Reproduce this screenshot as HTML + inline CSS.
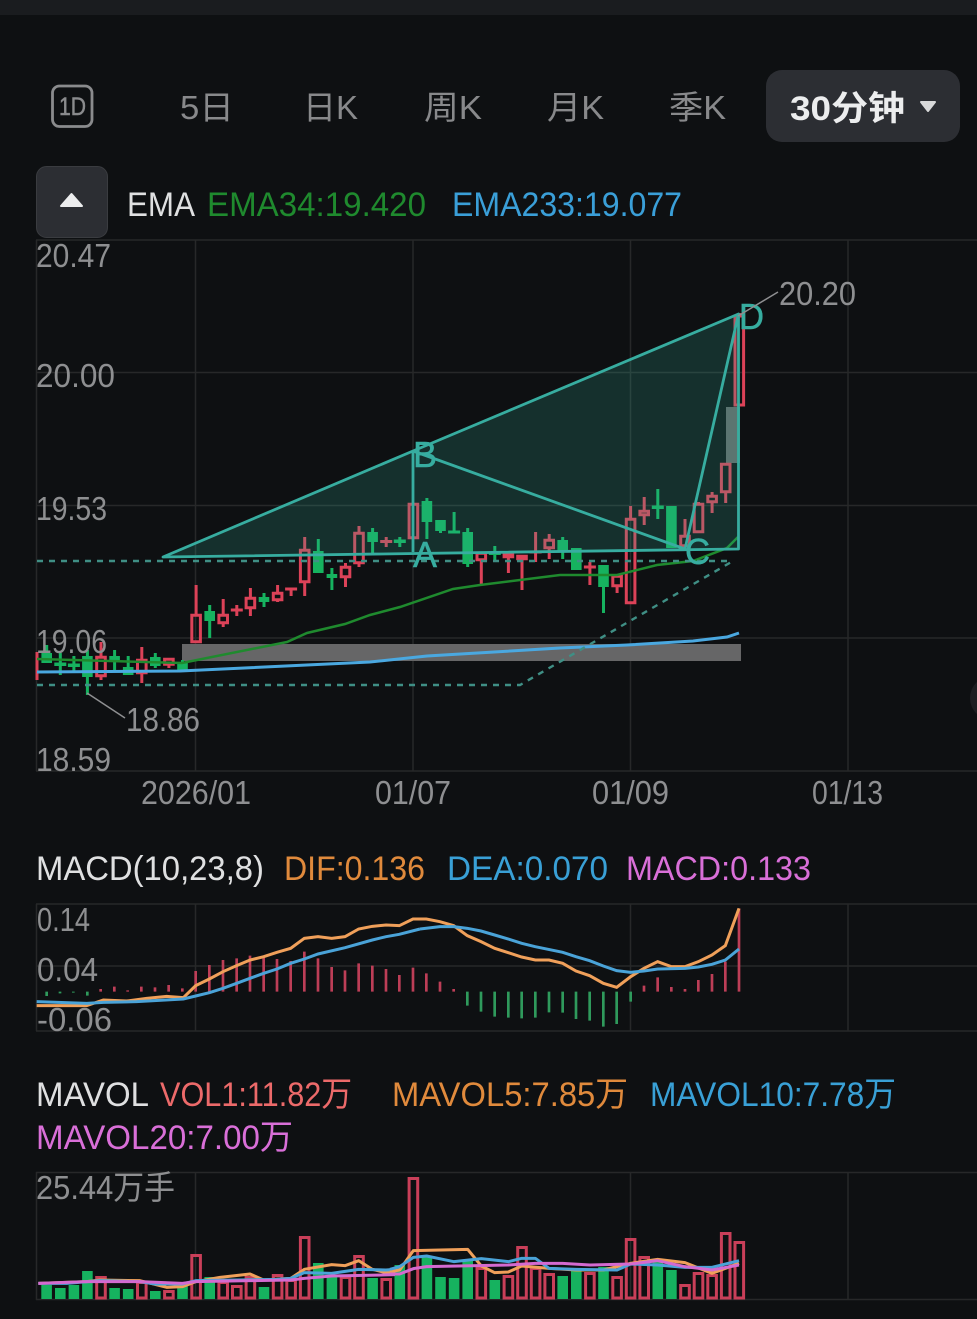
<!DOCTYPE html>
<html lang="zh">
<head>
<meta charset="utf-8">
<title>Chart</title>
<style>
html,body{margin:0;padding:0;background:#0e1012;width:977px;height:1319px;overflow:hidden}
svg{display:block;position:absolute;left:0;top:0}
text{font-family:"Liberation Sans","Noto Sans CJK SC",sans-serif}
.g{fill:#8e8f91;font-size:33px}
.t{fill:#88898b;font-size:33px}
.l{font-size:34px}
.a{fill:#37ada0;font-size:36px;stroke:#37ada0;stroke-width:.5px}
</style>
</head>
<body>
<svg width="977" height="1319" viewBox="0 0 977 1319" xmlns="http://www.w3.org/2000/svg">
<rect width="977" height="1319" fill="#0e1012"/>
<rect width="977" height="15" fill="#1a1c1f"/>

<!-- tabs -->
<rect x="52.5" y="86" width="39.5" height="40.5" rx="7" fill="none" stroke="#8a8b8d" stroke-width="2.8"/>
<text x="59" y="115" font-size="25" fill="#8a8b8d" stroke="#8a8b8d" stroke-width=".5" textLength="27" lengthAdjust="spacingAndGlyphs">1D</text>
<text class="t" x="180" y="119" textLength="54" lengthAdjust="spacingAndGlyphs">5日</text>
<text class="t" x="303" y="119" textLength="55" lengthAdjust="spacingAndGlyphs">日K</text>
<text class="t" x="424" y="119" textLength="58" lengthAdjust="spacingAndGlyphs">周K</text>
<text class="t" x="547" y="119" textLength="57" lengthAdjust="spacingAndGlyphs">月K</text>
<text class="t" x="669" y="119" textLength="57" lengthAdjust="spacingAndGlyphs">季K</text>
<rect x="766" y="70" width="194" height="72" rx="16" fill="#2c2e33"/>
<text x="790" y="120" font-size="34" font-weight="700" fill="#ecedee" textLength="115" lengthAdjust="spacingAndGlyphs">30分钟</text>
<path d="M921 102H935L928 111Z" fill="#d8d9da" stroke="#d8d9da" stroke-width="2" stroke-linejoin="round"/>

<!-- EMA header -->
<rect x="36.5" y="166.5" width="71" height="71" rx="10" fill="#2c2e33" stroke="#3a3c40"/>
<path d="M61 206H82L71.5 194Z" fill="#ecedee" stroke="#ecedee" stroke-width="2" stroke-linejoin="round"/>
<text class="l" x="127" y="216" fill="#dfe0e1" textLength="68" lengthAdjust="spacingAndGlyphs">EMA</text>
<text class="l" x="207" y="216" fill="#1f8a2e" textLength="219" lengthAdjust="spacingAndGlyphs">EMA34:19.420</text>
<text class="l" x="452" y="216" fill="#3a9fd8" textLength="230" lengthAdjust="spacingAndGlyphs">EMA233:19.077</text>

<!-- main grid -->
<path d="M36 240H977M36 372.500H977M36 505.500H977M36 638H977M36 771H977M36.500 240V771M195.500 240V771M413 240V771M630.500 240V771M848 240V771" stroke="#272829" stroke-width="1.500" fill="none"/>

<!-- gray zones -->
<rect x="182" y="644" width="559" height="17" fill="#666667"/>
<rect x="726" y="407" width="14" height="56" fill="#666667"/>

<!-- green candles -->
<path d="M46.700 645V663M60.300 653V675M73.900 656V672M87.400 650V695M114.600 650V671M128.200 656V675M155.300 653V668M182.500 660V671M209.700 605V638M264 593V607M318.300 539V573M331.900 568V590M372.600 528V553M399.800 537V547M426.900 498V539M440.500 520V533M454.100 512V533M467.700 528V567M494.800 546V562M562.700 537V559M576.300 548V570M603.500 565V613M657.800 489V519M671.400 506V548" stroke="#16b25f" stroke-width="3" fill="none"/>
<path d="M41.400 653h10.600v10h-10.600zM54.300 662.500h12v3.500h-12zM67.900 663.500h12v3.500h-12zM82.100 656h10.600v21h-10.600zM109.300 656h10.600v5h-10.600zM122.900 667h10.600v8h-10.600zM150 657h10.600v9h-10.600zM177.200 663h10.600v8h-10.600zM204.400 611h10.600v10h-10.600zM258.700 597h10.600v5h-10.600zM313 551h10.600v22h-10.600zM326.600 574h10.600v4h-10.600zM367.300 532h10.600v10h-10.600zM393.800 539.500h12v3.500h-12zM421.600 501h10.600v21h-10.600zM435.200 520h10.600v11h-10.600zM448.100 530.500h12v3h-12zM462.400 532h10.600v32h-10.600zM488.800 551.500h12v3.500h-12zM557.400 540h10.600v12h-10.600zM571 548h10.600v22h-10.600zM598.200 565h10.600v22h-10.600zM651.800 505.500h12v3.500h-12zM666.100 506h10.600v42h-10.600z" fill="#16b25f"/>

<!-- red candles -->
<path d="M37 652V680M101 642V656M101 677V680M141.800 647V659M141.800 674V683M168.900 665V668M196.100 585V614M223.200 599V614M223.200 624V627M236.800 605V616M230.800 610H242.800M250.400 588V597M250.400 609V616M277.600 585V592M277.600 601V602M291.100 588V596M285.100 589H297.100M304.700 537V549M304.700 583V596M345.500 563V566M345.500 578V587M359 526V532M359 564V567M386.200 537V547M380.200 541.500H392.200M481.300 561V585M508.400 558V573M522 560V590M535.600 532V562M529.600 552H541.600M549.200 534V539M549.200 549V559M589.900 562V585M583.900 567H595.900M617.100 587V593M630.600 506V518M644.200 497V510M644.200 516V525M685 519V535M698.500 502V503M712.100 492V495M712.100 503V513M725.700 493V503M739.300 313V316" stroke="#dc4258" stroke-width="3" fill="none"/>
<path d="M96.700 657.300h8.600v18.400h-8.600zM137.500 660.300h8.600v12.400h-8.600zM164.600 659.300h8.600v5h-8.600zM191.800 615.300h8.600v26.400h-8.600zM218.900 615.300h8.600v7.400h-8.600zM246.100 598.300h8.600v9.400h-8.600zM273.300 593.300h8.600v6.400h-8.600zM300.400 550.300h8.600v31.400h-8.600zM341.200 567.300h8.600v9.400h-8.600zM354.700 533.300h8.600v29.400h-8.600zM409.100 504.300h8.600v33.400h-8.600zM477 553.300h8.600v6.400h-8.600zM504.100 554.300h8.600v2.400h-8.600zM517.700 556.300h8.600v2.400h-8.600zM544.900 540.300h8.600v7.400h-8.600zM612.800 576.300h8.600v9.400h-8.600zM626.300 519.300h8.600v83.400h-8.600zM639.900 511.300h8.600v3.400h-8.600zM680.700 536.300h8.600v9.400h-8.600zM694.200 504.300h8.600v27.400h-8.600zM707.800 496.300h8.600v5.400h-8.600zM721.400 464.300h8.600v27.400h-8.600zM735 316h8.600v89h-8.600z" fill="none" stroke="#dc4258" stroke-width="3"/>

<!-- EMA lines -->
<path d="M37 659L182 663L287 642L307 633L345 624L370 615L400 607L453 589L480 585L560 575L617 575L657 565L693 561L727 548L738 537" fill="none" stroke="#1f8a2e" stroke-width="2.500"/>
<path d="M37 672L180 671L370 662L427 656L560 648L627 645L693 641L727 637L739 633" fill="none" stroke="#4aa8e0" stroke-width="3"/>

<!-- harmonic overlay -->
<path d="M163 557L738.500 314V549Z" fill="#33b39c" fill-opacity=".2"/>
<path d="M163 557L413 451L738.500 314V549ZM413 451V552M413 451L685 549L738.500 314" fill="none" stroke="#37ada0" stroke-width="2.800" stroke-linejoin="round"/>
<path d="M37 561H733M37 685H520L733 561" fill="none" stroke="#3f8f85" stroke-width="2.400" stroke-dasharray="6 6"/>
<text class="a" x="413" y="567" textLength="24" lengthAdjust="spacingAndGlyphs">A</text>
<text class="a" x="413" y="467" textLength="24" lengthAdjust="spacingAndGlyphs">B</text>
<text class="a" x="685" y="564" textLength="25" lengthAdjust="spacingAndGlyphs">C</text>
<text class="a" x="739" y="329" textLength="25" lengthAdjust="spacingAndGlyphs">D</text>

<!-- callouts -->
<path d="M87 693L125 718M738 316L778 292" stroke="#8e8f91" stroke-width="1.500" fill="none"/>

<!-- axis labels -->
<text class="g" x="36" y="267" textLength="75" lengthAdjust="spacingAndGlyphs">20.47</text>
<text class="g" x="36" y="387" textLength="79" lengthAdjust="spacingAndGlyphs">20.00</text>
<text class="g" x="36" y="520" textLength="71" lengthAdjust="spacingAndGlyphs">19.53</text>
<text class="g" x="36" y="653" textLength="71" lengthAdjust="spacingAndGlyphs">19.06</text>
<text class="g" x="36" y="771" textLength="75" lengthAdjust="spacingAndGlyphs">18.59</text>
<text class="g" x="126" y="731" textLength="74" lengthAdjust="spacingAndGlyphs">18.86</text>
<text class="g" x="779" y="305" textLength="77" lengthAdjust="spacingAndGlyphs">20.20</text>
<text class="g" x="141" y="804" textLength="110" lengthAdjust="spacingAndGlyphs">2026/01</text>
<text class="g" x="375" y="804" textLength="76" lengthAdjust="spacingAndGlyphs">01/07</text>
<text class="g" x="592" y="804" textLength="77" lengthAdjust="spacingAndGlyphs">01/09</text>
<text class="g" x="812" y="804" textLength="71" lengthAdjust="spacingAndGlyphs">01/13</text>

<circle cx="992" cy="698" r="22" fill="#1d1e21"/>

<!-- MACD labels -->
<text class="l" x="36" y="880" fill="#dfe0e1" textLength="228" lengthAdjust="spacingAndGlyphs">MACD(10,23,8)</text>
<text class="l" x="284" y="880" fill="#e08a3c" textLength="141" lengthAdjust="spacingAndGlyphs">DIF:0.136</text>
<text class="l" x="447" y="880" fill="#39a0d6" textLength="161" lengthAdjust="spacingAndGlyphs">DEA:0.070</text>
<text class="l" x="626" y="880" fill="#d96fd8" textLength="185" lengthAdjust="spacingAndGlyphs">MACD:0.133</text>

<!-- MACD grid -->
<path d="M36 904H977M36 966H977M36 1031H977M36.500 904V1031M195.500 904V1031M630.500 904V1031M848 904V1031" stroke="#272829" stroke-width="1.500" fill="none"/>

<!-- MACD left part -->
<g transform="translate(20,895) scale(.33333)" fill="none" stroke-width="8">
<path d="M80 290V303M120 290V295M160 290V293M202 290V302" stroke="#2f9a5c"/>
<path d="M242 282V290M283 275V290M323 286V290M364 275V290M405 277V290M446 270V290M487 280V290M527 228V290M568 210V290M609 195V290M650 190V290M690 182V290M731 188V290M771 192V290M812 198V290M853 170V290M894 190V290M935 216V290M975 226V290M1016 205V290M1057 212V290M1098 222V290M1138 240V290M1179 218V290" stroke="#bd3e57"/>
<path d="M50 332L200 332L250 315L320 318L380 310L440 304L490 308L527 272L568 252L609 230L650 212L690 195L731 185L771 172L812 160L853 130L894 125L935 130L975 125L1016 102L1057 94L1098 90L1138 92L1179 72L1200 72" stroke="#f0a05a" stroke-width="9"/>
<path d="M50 320L200 325L250 322L350 320L490 312L527 303L568 293L609 280L650 265L690 250L731 235L771 222L812 205L853 192L894 177L975 158L1057 135L1098 125L1138 118L1200 102" stroke="#4aa3d8" stroke-width="9"/>
</g>
<!-- MACD right part -->
<g transform="translate(420,895) scale(.33333)" fill="none" stroke-width="8">
<path d="M142 290V332M183 290V350M224 290V365M265 290V368M305 290V370M346 290V368M387 290V352M428 290V353M468 290V372M509 290V377M550 290V395M590 290V387M632 290V320" stroke="#2f9a5c"/>
<path d="M19 235V290M60 260V290M101 282V290M672 272V290M713 247V290M754 276V290M795 282V290M835 255V290M876 237V290M916 200V290M957 40V290" stroke="#bd3e57"/>
<path d="M0 72L19 72L60 80L101 92L142 122L183 140L224 160L265 173L305 186L346 195L387 195L428 205L468 228L509 242L550 265L590 277L632 245L672 220L713 200L754 215L795 215L835 200L876 180L916 152L957 40" stroke="#f0a05a" stroke-width="9"/>
<path d="M0 102L60 95L101 95L142 100L183 108L224 120L265 132L305 145L346 155L428 172L468 185L509 197L550 213L590 227L632 232L672 228L713 222L795 220L835 216L876 208L916 195L957 162" stroke="#4aa3d8" stroke-width="9"/>
</g>
<text class="g" x="37" y="931" textLength="53" lengthAdjust="spacingAndGlyphs">0.14</text>
<text class="g" x="37" y="981" textLength="61" lengthAdjust="spacingAndGlyphs">0.04</text>
<text class="g" x="37" y="1031" textLength="75" lengthAdjust="spacingAndGlyphs">-0.06</text>

<!-- MAVOL labels -->
<text class="l" x="36" y="1106" fill="#dfe0e1" textLength="113" lengthAdjust="spacingAndGlyphs">MAVOL</text>
<text class="l" x="160" y="1106" fill="#ec6a6a" textLength="192" lengthAdjust="spacingAndGlyphs">VOL1:11.82万</text>
<text class="l" x="392" y="1106" fill="#e08a3c" textLength="236" lengthAdjust="spacingAndGlyphs">MAVOL5:7.85万</text>
<text class="l" x="650" y="1106" fill="#39a0d6" textLength="246" lengthAdjust="spacingAndGlyphs">MAVOL10:7.78万</text>
<text class="l" x="36" y="1149" fill="#d96fd8" textLength="257" lengthAdjust="spacingAndGlyphs">MAVOL20:7.00万</text>

<!-- volume grid -->
<path d="M36 1172.500H977M36 1299.500H977M36.500 1172V1300M195.500 1172V1300M630.500 1172V1300M848 1172V1300" stroke="#272829" stroke-width="1.500" fill="none"/>

<!-- volume green -->
<path d="M41.300 1285h10.600V1299h-10.600zM55 1288h10.600V1299h-10.600zM68.600 1285h10.600V1299h-10.600zM82.100 1271h10.600V1299h-10.600zM109.300 1288h10.600V1299h-10.600zM122.900 1289h10.600V1299h-10.600zM150 1291h10.600V1299h-10.600zM177.200 1285h10.600V1299h-10.600zM204.400 1277h10.600V1299h-10.600zM258.700 1287h10.600V1299h-10.600zM313 1263h10.600V1299h-10.600zM326.600 1275h10.600V1299h-10.600zM367.300 1278h10.600V1299h-10.600zM394.500 1265h10.600V1299h-10.600zM421.600 1257h10.600V1299h-10.600zM435.200 1277h10.600V1299h-10.600zM448.800 1278h10.600V1299h-10.600zM462.400 1260h10.600V1299h-10.600zM489.500 1280h10.600V1299h-10.600zM557.400 1276h10.600V1299h-10.600zM571 1268h10.600V1299h-10.600zM598.200 1267h10.600V1299h-10.600zM652.500 1260h10.600V1299h-10.600zM666.100 1270h10.600V1299h-10.600z" fill="#16b25f"/>
<!-- volume red -->
<path d="M96.700 1277.500h8.600V1298h-8.600zM137.500 1282.500h8.600V1298h-8.600zM164.600 1291.500h8.600V1298h-8.600zM191.800 1255.500h8.600V1298h-8.600zM218.900 1282.500h8.600V1298h-8.600zM232.500 1286.500h8.600V1298h-8.600zM246.100 1277.500h8.600V1298h-8.600zM273.300 1275.500h8.600V1298h-8.600zM286.800 1280.500h8.600V1298h-8.600zM300.400 1237.500h8.600V1298h-8.600zM341.200 1277.500h8.600V1298h-8.600zM354.700 1256.500h8.600V1298h-8.600zM381.900 1279.500h8.600V1298h-8.600zM409.100 1178.500h8.600V1298h-8.600zM477 1268.500h8.600V1298h-8.600zM504.100 1276.500h8.600V1298h-8.600zM517.700 1247.500h8.600V1298h-8.600zM531.300 1268.500h8.600V1298h-8.600zM544.900 1274.500h8.600V1298h-8.600zM585.600 1273.500h8.600V1298h-8.600zM612.800 1277.500h8.600V1298h-8.600zM626.300 1239.500h8.600V1298h-8.600zM639.900 1257.500h8.600V1298h-8.600zM680.700 1285.500h8.600V1298h-8.600zM694.200 1273.500h8.600V1298h-8.600zM707.800 1275.500h8.600V1298h-8.600zM721.400 1233.500h8.600V1298h-8.600zM735 1242.500h8.600V1298h-8.600z" fill="none" stroke="#c93f59" stroke-width="3"/>

<!-- volume lines -->
<g transform="translate(20,1170) scale(.33333)" fill="none" stroke-width="9" stroke-linejoin="round">
<path d="M55 340L200 335L240 330L360 332L440 352L487 350L527 335L600 322L690 312L731 330L812 325L853 298L935 284L975 287L1016 272L1057 298L1098 308L1125 304" stroke="#f0a05a"/>
<path d="M55 340L140 340L240 332L360 335L405 342L487 342L527 332L650 330L771 328L812 325L853 308L935 310L1016 298L1098 300L1125 298" stroke="#4aa3d8"/>
<path d="M55 340L200 335L360 335L487 340L527 335L690 332L812 330L853 325L935 318L1125 314" stroke="#d46ad0"/>
</g>
<g transform="translate(390,1170) scale(.33333)" fill="none" stroke-width="9" stroke-linejoin="round">
<path d="M0 305L29 300L70 242L233 238L274 288L314 308L355 306L395 288L477 295L559 300L640 300L722 280L803 268L885 278L966 310L1047 280" stroke="#f0a05a"/>
<path d="M0 298L29 290L70 262L110 258L192 275L274 266L355 275L395 265L436 265L477 295L559 298L681 300L722 282L803 285L885 292L966 292L1047 272" stroke="#4aa3d8"/>
<path d="M0 312L29 312L70 296L110 290L355 285L436 280L518 280L600 285L722 282L803 272L885 290L966 300L1047 285" stroke="#d46ad0"/>
</g>
<text class="g" x="36" y="1199" textLength="139" lengthAdjust="spacingAndGlyphs">25.44万手</text>
</svg>
</body>
</html>
